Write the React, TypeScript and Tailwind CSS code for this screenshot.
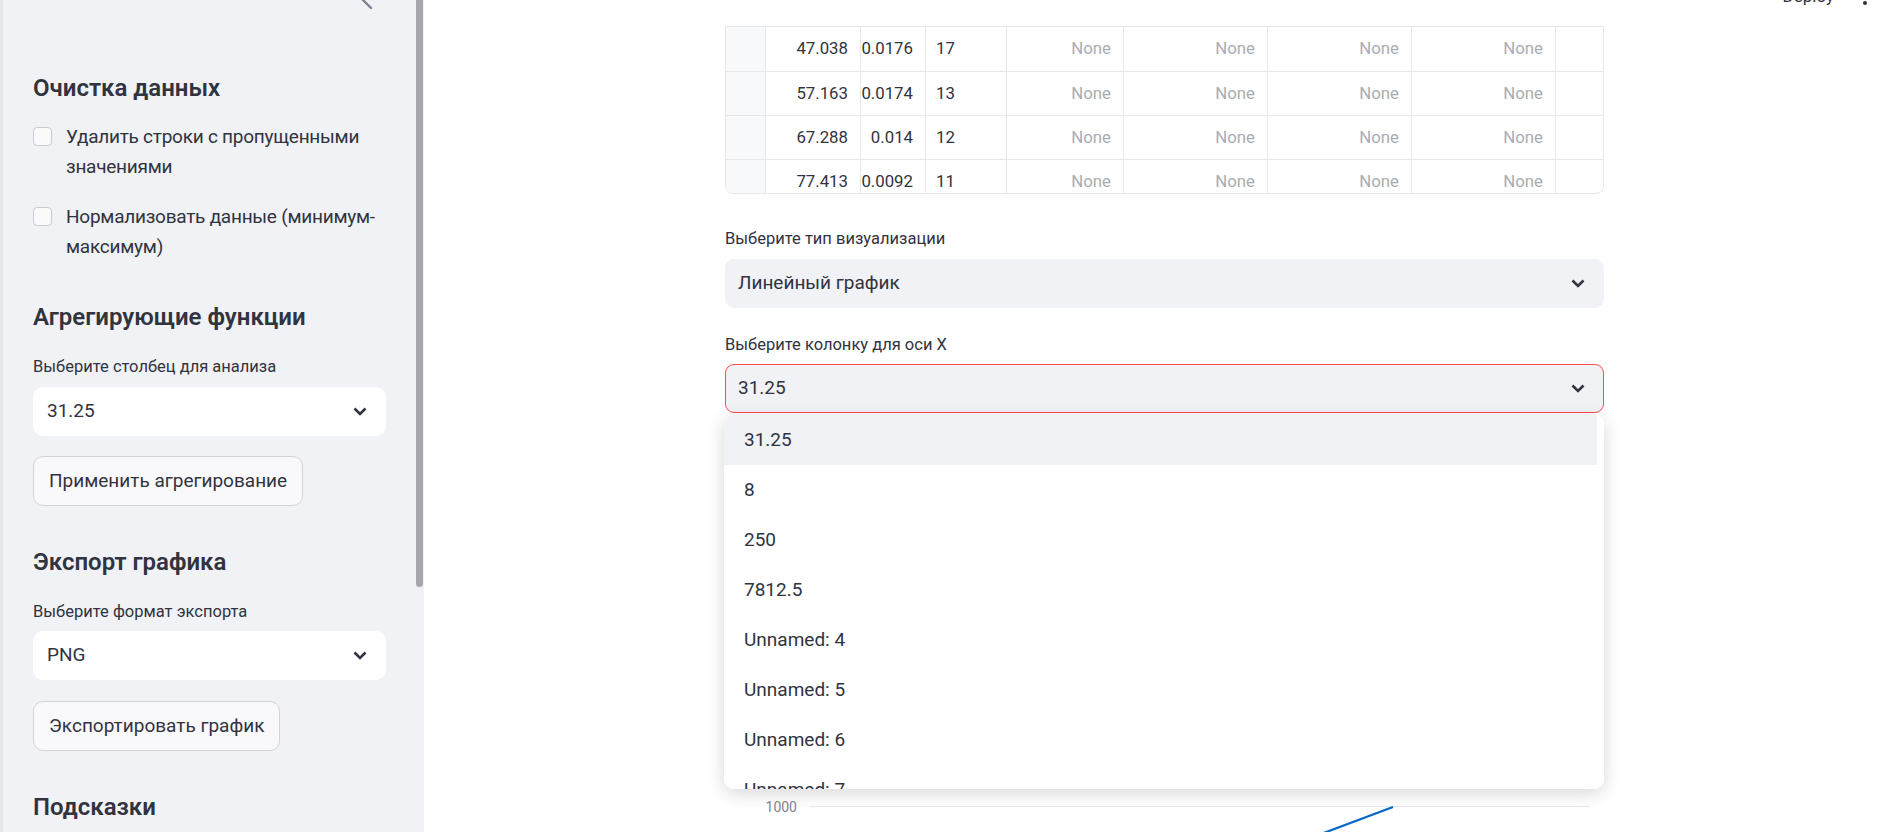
import React from "react";

const TEXT = "text-[#31333f]";

const Chevron = () => (
  <svg width="14" height="9" viewBox="0 0 14 9" fill="none" className="shrink-0">
    <path d="M1.5 1.5 L7 7 L12.5 1.5" stroke="#31333f" strokeWidth="2.6" />
  </svg>
);

function Checkbox({ lines, className = "" }: { lines: string[]; className?: string }) {
  return (
    <div className={"flex items-start gap-[14px] " + className}>
      <div className="mt-[5px] h-[19px] w-[19px] shrink-0 rounded-[4px] border border-[#c9cad1] bg-[#fafafb]" />
      <div className={"text-[19px] leading-[30px] tracking-[-0.25px] " + TEXT}>
        {lines.map((l) => (
          <div key={l}>{l}</div>
        ))}
      </div>
    </div>
  );
}

function SideHeading({ children, className = "" }: { children: React.ReactNode; className?: string }) {
  return (
    <div className={"flex h-[32px] items-center text-[24px] font-semibold " + TEXT + " " + className}>
      {children}
    </div>
  );
}

function SideLabel({ children, className = "" }: { children: React.ReactNode; className?: string }) {
  return <div className={"flex h-[24px] items-center text-[16.5px] " + TEXT + " " + className}>{children}</div>;
}

function SideSelect({ value, className = "" }: { value: string; className?: string }) {
  return (
    <div
      className={
        "flex h-[49px] w-[353px] items-center justify-between rounded-[10px] bg-white pl-[14px] pr-[19px] text-[19px] " +
        TEXT +
        " " +
        className
      }
    >
      <span>{value}</span>
      <Chevron />
    </div>
  );
}

function SideButton({ children, className = "" }: { children: React.ReactNode; className?: string }) {
  return (
    <div className={"flex " + className}>
      <div
        className={
          "flex h-[50px] items-center rounded-[10px] border border-[#d3d4da] bg-[#f9f9fb] px-[15px] text-[19px] " + TEXT
        }
      >
        {children}
      </div>
    </div>
  );
}

const rows = [
  ["47.038", "0.0176", "17"],
  ["57.163", "0.0174", "13"],
  ["67.288", "0.014", "12"],
  ["77.413", "0.0092", "11"],
];

function NoneCell({ w }: { w: string }) {
  return (
    <div className={"flex shrink-0 items-center justify-end border-r border-[#e6e7eb] pr-[12px] text-[#a9acb5] " + w}>
      None
    </div>
  );
}

function DataTable() {
  return (
    <div className="mt-[26px] h-[168px] w-[879px] overflow-hidden rounded-b-[8px] border border-[#e6e7eb] text-[16.8px]">
      {rows.map((r, i) => (
        <div key={i} className={"flex h-[44px] " + (i > 0 ? "border-t border-[#e6e7eb]" : "")}>
          <div className="w-[40px] shrink-0 border-r border-[#e6e7eb] bg-[#f8f9fb]" />
          <div className={"flex w-[95px] shrink-0 items-center justify-end border-r border-[#e6e7eb] pr-[12px] " + TEXT}>
            {r[0]}
          </div>
          <div className={"flex w-[65px] shrink-0 items-center justify-end border-r border-[#e6e7eb] pr-[12px] " + TEXT}>
            {r[1]}
          </div>
          <div className={"flex w-[81px] shrink-0 items-center border-r border-[#e6e7eb] pl-[10px] " + TEXT}>
            {r[2]}
          </div>
          <NoneCell w="w-[117px]" />
          <NoneCell w="w-[144px]" />
          <NoneCell w="w-[144px]" />
          <NoneCell w="w-[144px]" />
          <div className="flex-1" />
        </div>
      ))}
    </div>
  );
}

function MainSelect({ value, active = false, className = "" }: { value: string; active?: boolean; className?: string }) {
  return (
    <div
      className={
        "flex h-[49px] w-[879px] items-center justify-between rounded-[9px] border bg-[#f0f2f6] pl-[12px] pr-[18px] text-[19px] " +
        TEXT +
        " " +
        (active ? "border-[#ff4b4b]" : "border-[#f0f2f6]") +
        " " +
        className
      }
    >
      <span>{value}</span>
      <Chevron />
    </div>
  );
}

const options = ["31.25", "8", "250", "7812.5", "Unnamed: 4", "Unnamed: 5", "Unnamed: 6", "Unnamed: 7"];

export default function App() {
  return (
    <div className="relative flex h-[832px] w-[1880px] overflow-hidden bg-white font-['Roboto',sans-serif]">
      {/* Sidebar */}
      <aside className="relative h-full w-[424px] shrink-0 border-l-[3px] border-[#e4e6ec] bg-[#f0f2f6]">
        <svg className="absolute left-[352px] top-[-10px]" width="20" height="20" viewBox="0 0 20 20" fill="none">
          <path d="M16 2 L8 10 L16 18" stroke="#80838f" strokeWidth="2.4" strokeLinecap="round" />
        </svg>
        <div className="absolute right-[1px] top-0 h-[587px] w-[7px] rounded-b-[4px] bg-[#a5a6ae]" />
        <div className="flex flex-col pl-[30px] pt-[72px]">
          <SideHeading>Очистка данных</SideHeading>
          <Checkbox className="mt-[18px]" lines={["Удалить строки с пропущенными", "значениями"]} />
          <Checkbox className="mt-[20px]" lines={["Нормализовать данные (минимум-", "максимум)"]} />
          <SideHeading className="mt-[39px]">Агрегирующие функции</SideHeading>
          <SideLabel className="mt-[22px]">Выберите столбец для анализа</SideLabel>
          <SideSelect className="mt-[8px]" value="31.25" />
          <SideButton className="mt-[20px]">Применить агрегирование</SideButton>
          <SideHeading className="mt-[40px]">Экспорт графика</SideHeading>
          <SideLabel className="mt-[22px]">Выберите формат экспорта</SideLabel>
          <SideSelect className="mt-[7px]" value="PNG" />
          <SideButton className="mt-[21px]">Экспортировать график</SideButton>
          <SideHeading className="mt-[40px]">Подсказки</SideHeading>
        </div>
      </aside>

      {/* Main */}
      <main className="relative h-full flex-1">
        <div className="absolute right-[46px] top-[-16px] text-[17px] leading-[24px] text-[#31333f]">Deploy</div>
        <div className="absolute left-[1439px] top-[1px] h-[4px] w-[4px] rounded-full bg-[#31333f]" />

        <div className="flex flex-col pl-[301px]">
          <DataTable />
          <div className={"mt-[33px] flex h-[24px] items-center text-[16.5px] " + TEXT}>Выберите тип визуализации</div>
          <MainSelect className="mt-[8px]" value="Линейный график" />
          <div className={"mt-[25px] flex h-[24px] items-center text-[16.5px] " + TEXT}>Выберите колонку для оси X</div>
          <MainSelect className="mt-[7px]" value="31.25" active />
          <svg className="mt-[17px]" width="879" height="402" viewBox="0 0 879 402">
            <line x1="84" y1="376.5" x2="865" y2="376.5" stroke="#e6eaf1" strokeWidth="1" />
            <text x="72" y="382" textAnchor="end" fontSize="14" fill="#808495" fontFamily="Roboto, sans-serif">
              1000
            </text>
            <line x1="668" y1="377" x2="580" y2="410" stroke="#0068c9" strokeWidth="2.2" />
          </svg>
        </div>

        {/* Dropdown menu overlay */}
        <div className="absolute left-[300px] top-[415px] h-[374px] w-[880px] overflow-hidden rounded-[9px] bg-white shadow-[0_4px_18px_rgba(0,0,0,0.16)]">
          <div className="pr-[7px]">
            {options.map((o, i) => (
              <div
                key={o}
                className={
                  "flex h-[50px] items-center pl-[20px] text-[19px] " + TEXT + " " + (i === 0 ? "bg-[#f0f2f6]" : "")
                }
              >
                {o}
              </div>
            ))}
          </div>
        </div>
      </main>
    </div>
  );
}
